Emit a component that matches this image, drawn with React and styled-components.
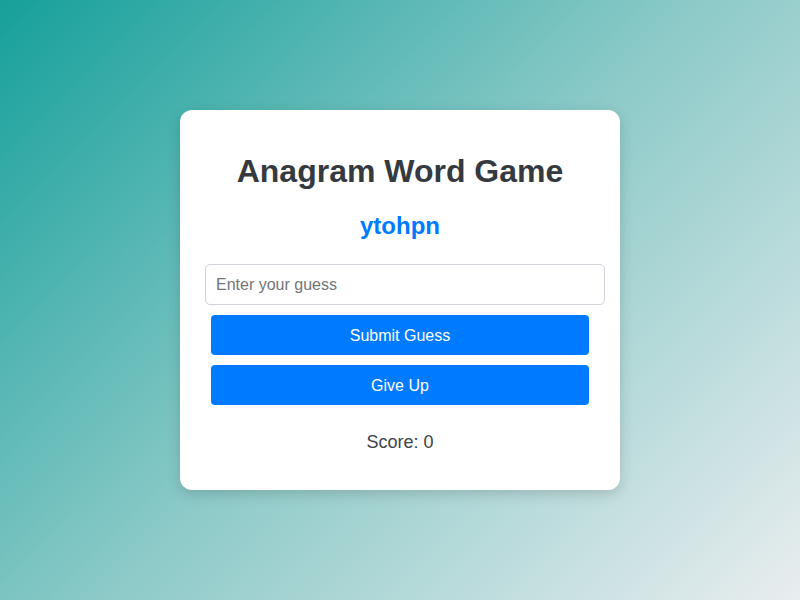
import React, { useState } from "react";
import styled, { createGlobalStyle } from "styled-components";

const GlobalStyle = createGlobalStyle`
  html, body {
    margin: 0;
    padding: 0;
  }
  body {
    font-family: "Liberation Sans", Arial, sans-serif;
    background: linear-gradient(135deg, #16a09b 0%, #8ccac8 50%, #e9edef 100%);
    min-height: 100vh;
  }
`;

const Page = styled.div`
  min-height: 100vh;
  display: flex;
  align-items: center;
  justify-content: center;
`;

const Card = styled.div`
  width: 440px;
  box-sizing: border-box;
  padding: 43px 25px 36px;
  background: #ffffff;
  border-radius: 12px;
  box-shadow: 0 4px 14px rgba(0, 0, 0, 0.16);
  display: flex;
  flex-direction: column;
  align-items: center;
`;

const Title = styled.h1`
  margin: 0;
  font-size: 32px;
  font-weight: 700;
  color: #343a40;
  line-height: 37px;
`;

const Scrambled = styled.p`
  margin: 22px 0 0;
  font-size: 24px;
  font-weight: 700;
  color: #007bff;
  line-height: 28px;
`;

const GuessInput = styled.input`
  align-self: flex-start;
  width: 400px;
  height: 41px;
  box-sizing: border-box;
  margin-top: 24px;
  padding: 10px;
  border: 1px solid #ced4da;
  border-radius: 5px;
  font-family: inherit;
  font-size: 16px;
  color: #343a40;
  outline: none;

  &::placeholder {
    color: #757575;
  }
`;

const Button = styled.button`
  width: 378px;
  height: 40px;
  margin-top: ${(p) => p.$gap}px;
  padding: 2px 0 0;
  border: none;
  border-radius: 4px;
  background: #007bff;
  color: #ffffff;
  font-family: inherit;
  font-size: 16px;
  cursor: pointer;
`;

const Score = styled.p`
  margin: 26px 0 0;
  font-size: 18px;
  line-height: 23px;
  color: #3d434a;
`;

export default function App() {
  const [guess, setGuess] = useState("");
  return (
    <>
      <GlobalStyle />
      <Page>
        <Card>
          <Title>Anagram Word Game</Title>
          <Scrambled>ytohpn</Scrambled>
          <GuessInput
            value={guess}
            onChange={(e) => setGuess(e.target.value)}
            placeholder="Enter your guess"
          />
          <Button $gap={10}>Submit Guess</Button>
          <Button $gap={10}>Give Up</Button>
          <Score>Score: 0</Score>
        </Card>
      </Page>
    </>
  );
}
